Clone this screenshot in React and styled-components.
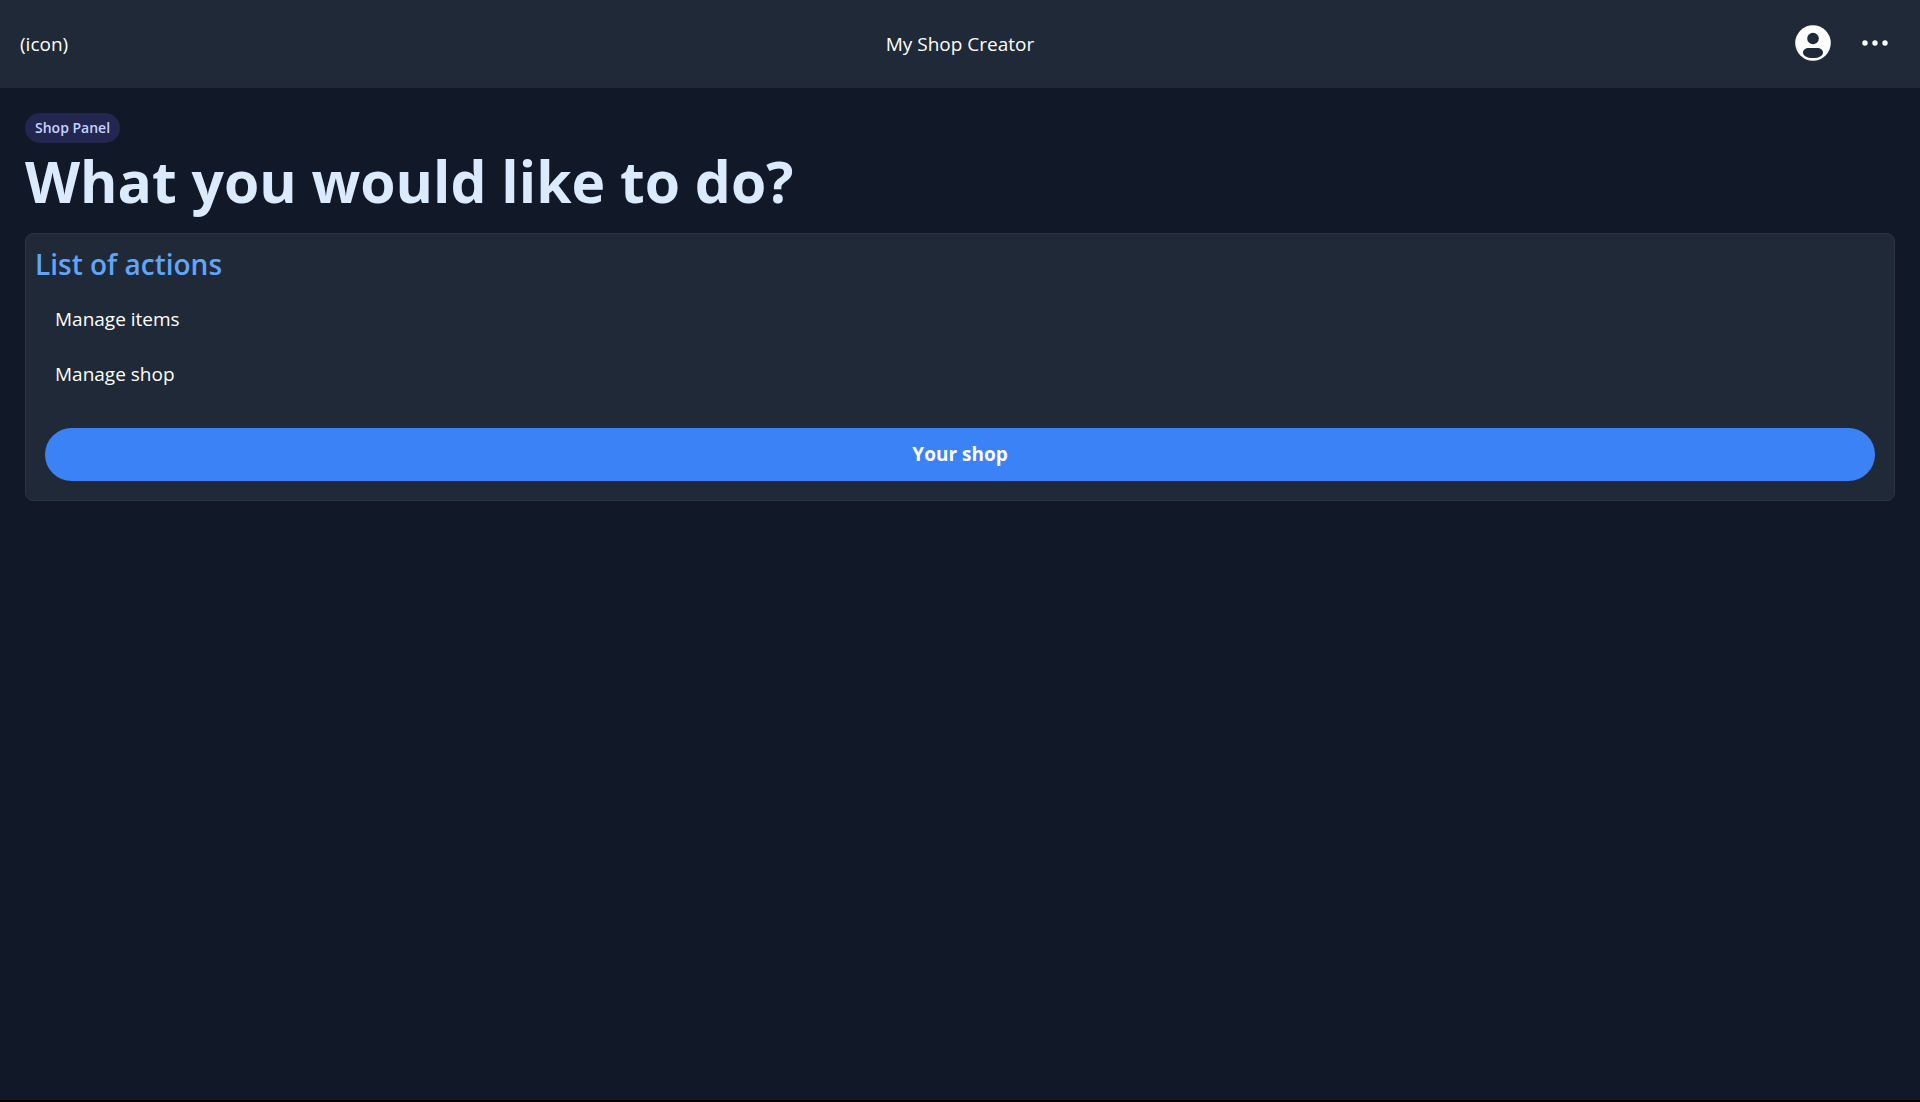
import React from "react";
import styled, { createGlobalStyle } from "styled-components";

const GlobalStyle = createGlobalStyle`
  *, *::before, *::after { box-sizing: border-box; }
  body {
    margin: 0;
    background: #111827;
    color: #fff;
    font-family: "Segoe UI", "Open Sans", "Noto Sans", sans-serif;
    font-size: 19px;
    line-height: 30px;
  }
  h1, h2, ul { margin: 0; padding: 0; }
  button { font: inherit; color: inherit; border: 0; cursor: pointer; }
`;

const Page = styled.div`
  min-height: 100vh;
  display: flex;
  flex-direction: column;
  border-bottom: 2px solid #000;
`;

const Header = styled.header`
  display: grid;
  grid-template-columns: 1fr auto 1fr;
  align-items: center;
  height: 88px;
  padding: 0 20px;
  background: #1f2937;
`;

const HomeLink = styled.a`
  justify-self: start;
  color: inherit;
  text-decoration: none;
`;

const HeaderActions = styled.div`
  display: flex;
  justify-content: flex-end;
  gap: 12px;
  padding-bottom: 2px;
`;

const IconButton = styled.button`
  display: grid;
  place-items: center;
  width: 50px;
  height: 50px;
  padding: 0;
  background: transparent;
`;

const Main = styled.main`
  display: flex;
  flex-direction: column;
  align-items: flex-start;
  padding: 25px;
`;

const Badge = styled.span`
  padding: 5px 10px;
  border-radius: 15px;
  background: #23264f;
  color: #c7d2fe;
  font-size: 14px;
  font-weight: 600;
  line-height: 20px;
`;

const Heading = styled.h1`
  color: #dbeafe;
  font-size: 57px;
  font-weight: 700;
  line-height: 76px;
`;

const Card = styled.section`
  align-self: stretch;
  margin-top: 14px;
  padding: 10px 9px 9px;
  border: 1px solid #2a3544;
  border-radius: 8px;
  background: #1f2937;
`;

const CardTitle = styled.h2`
  color: #60a5fa;
  font-size: 28px;
  font-weight: 600;
  line-height: 40px;
`;

const ActionList = styled.ul`
  margin: 8px 0 26px;
  list-style: none;
`;

const ActionLink = styled.a`
  display: block;
  padding: 12px 20px 13px;
  color: inherit;
  text-decoration: none;
`;

const PrimaryButton = styled.button`
  display: block;
  width: calc(100% - 20px);
  margin: 0 10px 10px;
  padding: 11px 20px 12px;
  border-radius: 27px;
  background: #3b82f6;
  font-weight: 700;
`;

const actions = ["Manage items", "Manage shop"];

function AccountIcon() {
  return (
    <svg width="36" height="36" viewBox="0 0 36 36" aria-hidden="true">
      <circle cx="18" cy="18" r="17.8" fill="#fff" />
      <circle cx="18" cy="13.5" r="5.8" fill="#1f2937" />
      <path
        d="M14 23h8c3.500 0 6 2 6 4.700 0 3-4.200 5.300-10 5.300S8 30.700 8 27.700c0-2.700 2.500-4.700 6-4.700Z"
        fill="#1f2937"
      />
    </svg>
  );
}

function MoreIcon() {
  return (
    <svg width="26" height="6" viewBox="0 0 26 6" fill="#fff" aria-hidden="true">
      <circle cx="3" cy="3" r="2.700" />
      <circle cx="13" cy="3" r="2.700" />
      <circle cx="23" cy="3" r="2.700" />
    </svg>
  );
}

export default function App() {
  return (
    <Page>
      <GlobalStyle />
      <Header>
        <HomeLink href="#home">(icon)</HomeLink>
        <span>My Shop Creator</span>
        <HeaderActions>
          <IconButton type="button" aria-label="Account"><AccountIcon /></IconButton>
          <IconButton type="button" aria-label="More"><MoreIcon /></IconButton>
        </HeaderActions>
      </Header>
      <Main>
        <Badge>Shop Panel</Badge>
        <Heading>What you would like to do?</Heading>
        <Card>
          <CardTitle>List of actions</CardTitle>
          <ActionList>
            {actions.map((label) => (
              <li key={label}><ActionLink href="#">{label}</ActionLink></li>
            ))}
          </ActionList>
          <PrimaryButton type="button">Your shop</PrimaryButton>
        </Card>
      </Main>
    </Page>
  );
}
